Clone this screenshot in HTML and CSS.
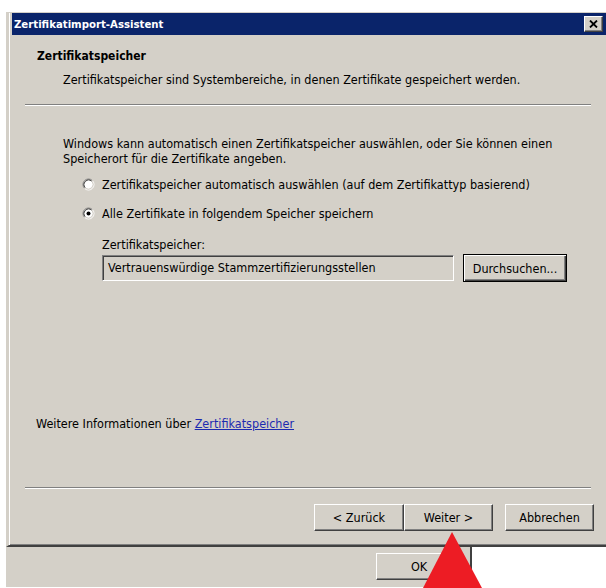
FILE: index.html
```html
<!DOCTYPE html>
<html lang="de">
<head>
<meta charset="utf-8">
<title>Zertifikatimport-Assistent</title>
<link rel="stylesheet" href="styles.css">
</head>
<body>
<div class="window">
  <div class="titlebar">
    <span class="title">Zertifikatimport-Assistent</span>
    <button class="close" aria-label="Schließen">
      <svg width="9" height="8" viewBox="0 0 9 8"><path d="M1,0.5 L8,7.5 M8,0.5 L1,7.5" stroke="#000" stroke-width="1.8" fill="none"/></svg>
    </button>
  </div>

  <div class="header">
    <div class="heading">Zertifikatspeicher</div>
    <div class="subtitle">Zertifikatspeicher sind Systembereiche, in denen Zertifikate gespeichert werden.</div>
  </div>
  <div class="rule rule-top"></div>

  <div class="content">
    <p class="intro">
      <span>Windows kann automatisch einen Zertifikatspeicher auswählen, oder Sie können einen</span>
      <span>Speicherort für die Zertifikate angeben.</span>
    </p>
    <label class="radio">
      <svg width="13" height="13" viewBox="0 0 13 13">
        <circle cx="6.5" cy="6.5" r="4.5" fill="#fff"/>
        <path d="M2.61,10.39 A5.5,5.5 0 0 1 10.39,2.61" stroke="#808080" fill="none"/>
        <path d="M10.39,2.61 A5.5,5.5 0 0 1 2.61,10.39" stroke="#fff" fill="none"/>
        <path d="M3.32,9.68 A4.5,4.5 0 0 1 9.68,3.32" stroke="#404040" fill="none"/>
        <path d="M9.68,3.32 A4.5,4.5 0 0 1 3.32,9.68" stroke="#d4d0c8" fill="none"/>
      </svg>
      <span>Zertifikatspeicher automatisch auswählen (auf dem Zertifikattyp basierend)</span>
    </label>
    <label class="radio radio-second">
      <svg width="13" height="13" viewBox="0 0 13 13">
        <circle cx="6.5" cy="6.5" r="4.5" fill="#fff"/>
        <path d="M2.61,10.39 A5.5,5.5 0 0 1 10.39,2.61" stroke="#808080" fill="none"/>
        <path d="M10.39,2.61 A5.5,5.5 0 0 1 2.61,10.39" stroke="#fff" fill="none"/>
        <path d="M3.32,9.68 A4.5,4.5 0 0 1 9.68,3.32" stroke="#404040" fill="none"/>
        <path d="M9.68,3.32 A4.5,4.5 0 0 1 3.32,9.68" stroke="#d4d0c8" fill="none"/>
        <circle cx="6.5" cy="6.5" r="2" fill="#000"/>
      </svg>
      <span>Alle Zertifikate in folgendem Speicher speichern</span>
    </label>
    <div class="store-label">Zertifikatspeicher:</div>
    <div class="store-row">
      <div class="field">Vertrauenswürdige Stammzertifizierungsstellen</div>
      <button class="btn btn-default">Durchsuchen...</button>
    </div>
  </div>

  <p class="more">Weitere Informationen über <a href="#">Zertifikatspeicher</a></p>
  <div class="rule rule-bottom"></div>

  <div class="actions">
    <button class="btn nav">&lt; Zurück</button>
    <button class="btn nav">Weiter &gt;</button>
    <button class="btn nav cancel">Abbrechen</button>
  </div>
</div>

<div class="backdrop">
  <button class="btn ok">OK</button>
</div>

<svg class="pointer" width="60" height="56" viewBox="0 0 60 56">
  <polygon points="29,0 0,56 59,56" fill="#ed1c24"/>
</svg>
</body>
</html>
```
FILE: styles.css
```css
html, body {
  margin: 0;
  padding: 0;
}

body {
  background: #fff;
  width: 606px;
  height: 588px;
  overflow: hidden;
  position: relative;
  font-family: "DejaVu Sans Condensed", "DejaVu Sans", sans-serif;
  font-stretch: condensed;
  font-size: 12.5px;
  color: #000;
}

/* dialog frame */
.window {
  margin: 12px 0 0 6px;
  width: 597px;
  background: #d4d0c8;
  border-top: 1px solid #d4d0c8;
  border-left: 3px solid #d4d0c8;
  border-bottom: 2px solid #404040;
  box-shadow: inset 1px 0 0 #fff, inset 0 -1px 0 #808080;
  padding-bottom: 14px;
}

.titlebar {
  margin-left: 3px;
  height: 22px;
  background: #0a246a;
  display: flex;
  align-items: center;
  justify-content: space-between;
}

.title {
  color: #fff;
  font-weight: bold;
  font-size: 11.3px;
  padding-left: 2px;
}

.close {
  width: 19px;
  height: 16px;
  margin-right: 3px;
  padding: 0;
  background: #d4d0c8;
  border: 1px solid;
  border-color: #fff #404040 #404040 #fff;
  box-shadow: inset -1px -1px 0 #808080;
  display: flex;
  align-items: center;
  justify-content: center;
}

/* header block */
.header {
  padding: 14px 0 0 28px;
}

.heading {
  font-weight: bold;
  font-size: 12px;
  line-height: 15px;
}

.subtitle {
  margin: 8px 0 0 26px;
  line-height: 15px;
}

/* etched separators */
.rule {
  height: 0;
  border-top: 1px solid #808080;
  border-bottom: 1px solid #fff;
  margin-left: 16px;
  margin-right: 15px;
}

.rule-top {
  margin-top: 17px;
}

.content {
  padding-left: 54px;
}

.intro {
  margin: 30px 0 0;
  line-height: 15px;
}

.intro span {
  display: block;
  white-space: nowrap;
}

.radio {
  display: flex;
  align-items: center;
  gap: 7px;
  margin: 11px 0 0 19px;
  height: 15px;
  line-height: 15px;
}

.radio svg {
  flex: none;
}

.radio-second {
  margin-top: 14px;
}

.store-label {
  margin: 16px 0 0 39px;
  line-height: 15px;
}

.store-row {
  margin: 2px 0 0 39px;
  display: flex;
  align-items: center;
  gap: 9px;
  height: 28px;
}

.field {
  box-sizing: border-box;
  width: 352px;
  height: 26px;
  padding-left: 5px;
  line-height: 24px;
  border: 1px solid;
  border-color: #808080 #fff #fff #808080;
  box-shadow: inset 1px 1px 0 #404040, inset -1px -1px 0 #d4d0c8;
  background: #d4d0c8;
  white-space: nowrap;
}

/* classic 3D push buttons */
.btn {
  box-sizing: border-box;
  font: inherit;
  color: #000;
  padding: 0;
  background: #d4d0c8;
  border: 1px solid;
  border-color: #fff #404040 #404040 #fff;
  box-shadow: inset -1px -1px 0 #808080;
}

.btn-default {
  width: 104px;
  height: 28px;
  border: 1px solid #000;
  box-shadow: inset 1px 1px 0 #fff, inset -1px -1px 0 #404040, inset -2px -2px 0 #808080;
}

.more {
  margin: 134px 0 0 27px;
  line-height: 15px;
}

.more a {
  color: #1c2bb0;
  text-decoration: underline;
}

.rule-bottom {
  margin-top: 56px;
}

.actions {
  margin-top: 15px;
  display: flex;
  justify-content: flex-end;
  padding-right: 12px;
}

.nav {
  width: 90px;
  height: 27px;
}

.nav + .nav {
  width: 89px;
}

.cancel {
  margin-left: 12px;
}

/* the window underneath */
.backdrop {
  margin-left: 6px;
  width: 466px;
  height: 40px;
  background: #d4d0c8;
  border-right: 2px solid #404040;
  padding-top: 6px;
  box-sizing: border-box;
}

.ok {
  display: block;
  margin-left: 370px;
  width: 86px;
  height: 27px;
}

/* red pointer drawn over the dialogs */
.pointer {
  position: absolute;
  left: 423px;
  top: 532px;
}
```
